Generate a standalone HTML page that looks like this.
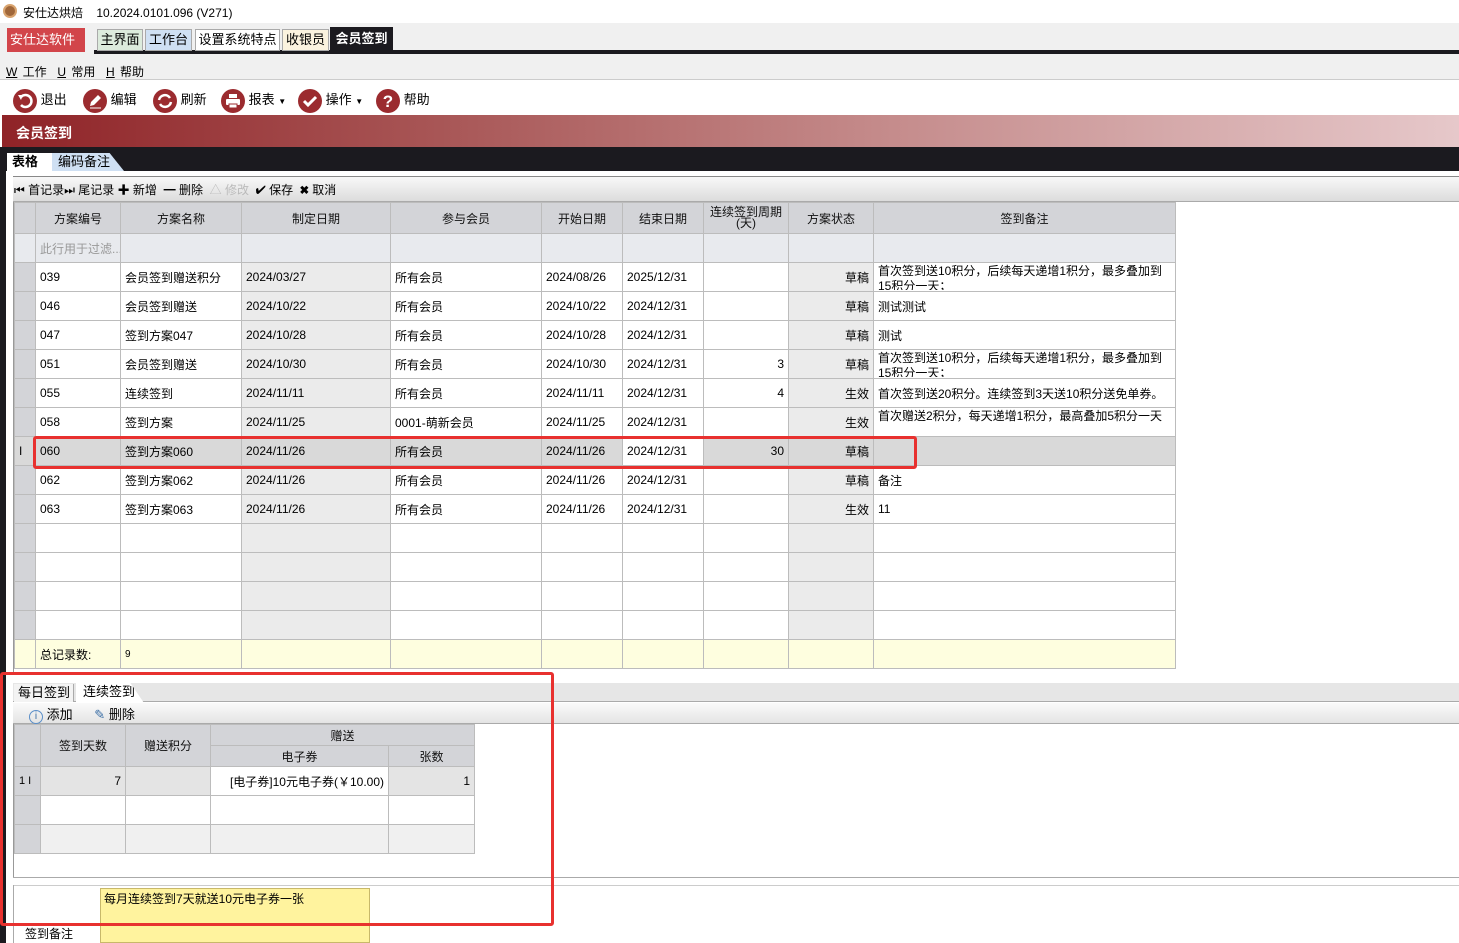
<!DOCTYPE html>
<html><head><meta charset="utf-8">
<style>
*{margin:0;padding:0;box-sizing:border-box}
body{width:1459px;height:943px;overflow:hidden;background:#fff;font-family:"Liberation Sans","Noto Sans CJK SC",sans-serif;font-size:12px;color:#000;position:relative}
.a{position:absolute}
.ico{display:inline-block;width:24px;height:24px;border-radius:50%;background:#9b2b2f;vertical-align:middle;position:relative}
.tb{position:absolute;top:88px;font-size:13px;line-height:24px;white-space:nowrap}
table{border-collapse:collapse;table-layout:fixed;position:absolute}
td{border:1px solid #bcbcbc;padding:0 4px;white-space:nowrap;overflow:hidden;font-size:12px}
.h td{background:#d3d4d8;text-align:center;color:#111}
.f td{background:#e8eaee}
.g{background:#ebebeb}
.ind{background:#d3d4d8}
.r{text-align:right}
.sel td{background:#d9d9d9}
.tot td{background:#fefedf}
.m{line-height:15px;white-space:normal;height:26px;overflow:hidden}
</style></head><body>
<div class="a" style="left:3px;top:4px;width:14px;height:14px;border-radius:50%;background:#a0673a;border:2px solid #d9a46f"></div>
<div class="a" style="left:23px;top:4px;font-size:12px">安仕达烘焙 &nbsp; &nbsp;10.2024.0101.096 (V271)</div>
<div class="a" style="left:0;top:23px;width:1459px;height:37px;background:#f0f0f0"></div>
<div class="a" style="left:7px;top:28px;width:78px;height:24px;background:#d2454a;color:#fff;font-size:13px;line-height:24px;padding-left:3px">安仕达软件 ▾</div>
<div class="a" style="left:94px;top:50px;width:1365px;height:4px;background:#1b1a1f"></div>
<div class="a" style="left:97px;top:29px;width:46px;height:22px;background:#dcebdc;border:1px solid #aaa;font-size:13px;line-height:20px;text-align:center">主界面</div>
<div class="a" style="left:145px;top:29px;width:47px;height:22px;background:#cfe0f3;border:1px solid #aaa;font-size:13px;line-height:20px;text-align:center">工作台</div>
<div class="a" style="left:195px;top:29px;width:85px;height:22px;background:#fff;border:1px solid #aaa;font-size:13px;line-height:20px;text-align:center">设置系统特点</div>
<div class="a" style="left:282px;top:29px;width:47px;height:22px;background:#fbf3df;border:1px solid #aaa;font-size:13px;line-height:20px;text-align:center">收银员</div>
<div class="a" style="left:330px;top:27px;width:63px;height:25px;background:#1b1a1f;color:#fff;font-size:13px;line-height:24px;text-align:center;font-weight:bold">会员签到</div>
<div class="a" style="left:0;top:60px;width:1459px;height:20px;background:#f0f0f0;border-bottom:1px solid #ccc"></div>
<div class="a" style="left:6px;top:63px;font-size:12px;word-spacing:2px"><u>W</u> 工作 &nbsp;<u>U</u> 常用 &nbsp;<u>H</u> 帮助</div>
<div class="tb" style="left:13px"><span class="ico"><svg width="24" height="24"><path d="M8 8 A6 6 0 1 1 8 16" stroke="#fff" stroke-width="2.5" fill="none"/><path d="M5 6 L10 6 L8 11z" fill="#fff"/></svg></span> 退出</div>
<div class="tb" style="left:83px"><span class="ico"><svg width="24" height="24"><path d="M7 17 L8 13 L15 6 L18 9 L11 16z" fill="#fff"/><path d="M7 19h11" stroke="#fff" stroke-width="1"/></svg></span> 编辑</div>
<div class="tb" style="left:153px"><span class="ico"><svg width="24" height="24"><path d="M6 11 A6 6 0 0 1 17 9 M18 13 A6 6 0 0 1 7 15" stroke="#fff" stroke-width="2.5" fill="none"/></svg></span> 刷新</div>
<div class="tb" style="left:221px"><span class="ico"><svg width="24" height="24"><rect x="8" y="5" width="8" height="4" fill="#fff"/><rect x="5" y="10" width="14" height="6" rx="1" fill="#fff"/><rect x="8" y="15" width="8" height="4" fill="#fff" stroke="#9b2b2f"/></svg></span> 报表 <span style="font-size:8px">▼</span></div>
<div class="tb" style="left:298px"><span class="ico"><svg width="24" height="24"><path d="M6 12 L10 16 L18 8" stroke="#fff" stroke-width="3" fill="none"/></svg></span> 操作 <span style="font-size:8px">▼</span></div>
<div class="tb" style="left:376px"><span class="ico"><svg width="24" height="24"><text x="12" y="18" font-size="17" font-weight="bold" fill="#fff" text-anchor="middle" font-family="Liberation Sans">?</text></svg></span> 帮助</div>
<div class="a" style="left:2px;top:115px;width:1457px;height:32px;background:linear-gradient(90deg,#8f2327 0%,#a85656 30%,#c48a8a 60%,#e6c8ca 100%)"></div>
<div class="a" style="left:16px;top:123px;color:#fff;font-size:14px;font-weight:bold">会员签到</div>
<div class="a" style="left:0;top:147px;width:1459px;height:24px;background:#1b1a1f"></div>
<div class="a" style="left:0;top:147px;width:6px;height:796px;background:#1b1a1f"></div>
<div class="a" style="left:7px;top:153px;width:45px;height:18px;background:#fff;font-weight:bold;font-size:13px;padding-left:5px;line-height:18px">表格</div>
<div class="a" style="left:52px;top:153px;width:72px;height:18px;background:#cfe0f3;clip-path:polygon(0 0,80% 0,100% 100%,0 100%);font-size:13px;padding-left:6px;line-height:18px">编码备注</div>
<div class="a" style="left:6px;top:171px;width:1453px;height:772px;background:#fff"></div>
<div class="a" style="left:13px;top:176px;width:1446px;height:26px;background:linear-gradient(#f8f8f8,#dcdcdc);border-top:1px solid #888;border-bottom:1px solid #aaa"></div>
<div class="a" style="left:14px;top:181px;font-size:12px">⏮ 首记录⏭ 尾记录 ✚ 新增 &nbsp;━ 删除 &nbsp;<span style="color:#bbb">△ 修改</span> &nbsp;✔ 保存 &nbsp;✖ 取消</div>
<div class="a" style="left:13px;top:202px;width:1px;height:470px;background:#999"></div>
<table style="left:14px;top:202px;width:1161px">
<col style="width:21px"><col style="width:85px"><col style="width:121px"><col style="width:149px"><col style="width:151px"><col style="width:81px"><col style="width:81px"><col style="width:85px"><col style="width:85px"><col style="width:302px">
<tr class="h" style="height:31px"><td></td><td>方案编号</td><td>方案名称</td><td>制定日期</td><td>参与会员</td><td>开始日期</td><td>结束日期</td><td style="line-height:11px;white-space:normal;padding:0">连续签到周期(天)</td><td>方案状态</td><td>签到备注</td></tr>
<tr class="f" style="height:29px"><td class="ind"></td><td style="color:#999">此行用于过滤...</td><td></td><td></td><td></td><td></td><td></td><td></td><td></td><td></td></tr>
<tr style="height:29px"><td class="ind"></td><td>039</td><td>会员签到赠送积分</td><td class="g">2024/03/27</td><td>所有会员</td><td>2024/08/26</td><td>2025/12/31</td><td></td><td class="g r">草稿</td><td><div class="m">首次签到送10积分，后续每天递增1积分，最多叠加到15积分一天；</div></td></tr>
<tr style="height:29px"><td class="ind"></td><td>046</td><td>会员签到赠送</td><td class="g">2024/10/22</td><td>所有会员</td><td>2024/10/22</td><td>2024/12/31</td><td></td><td class="g r">草稿</td><td>测试测试</td></tr>
<tr style="height:29px"><td class="ind"></td><td>047</td><td>签到方案047</td><td class="g">2024/10/28</td><td>所有会员</td><td>2024/10/28</td><td>2024/12/31</td><td></td><td class="g r">草稿</td><td>测试</td></tr>
<tr style="height:29px"><td class="ind"></td><td>051</td><td>会员签到赠送</td><td class="g">2024/10/30</td><td>所有会员</td><td>2024/10/30</td><td>2024/12/31</td><td class="r">3</td><td class="g r">草稿</td><td><div class="m">首次签到送10积分，后续每天递增1积分，最多叠加到15积分一天；</div></td></tr>
<tr style="height:29px"><td class="ind"></td><td>055</td><td>连续签到</td><td class="g">2024/11/11</td><td>所有会员</td><td>2024/11/11</td><td>2024/12/31</td><td class="r">4</td><td class="g r">生效</td><td>首次签到送20积分。连续签到3天送10积分送免单券。</td></tr>
<tr style="height:29px"><td class="ind"></td><td>058</td><td>签到方案</td><td class="g">2024/11/25</td><td>0001-萌新会员</td><td>2024/11/25</td><td>2024/12/31</td><td></td><td class="g r">生效</td><td><div class="m">首次赠送2积分，每天递增1积分，最高叠加5积分一天</div></td></tr>
<tr class="sel" style="height:29px"><td class="ind">I</td><td>060</td><td>签到方案060</td><td>2024/11/26</td><td>所有会员</td><td>2024/11/26</td><td style="background:#fff">2024/12/31</td><td class="r">30</td><td class="r">草稿</td><td></td></tr>
<tr style="height:29px"><td class="ind"></td><td>062</td><td>签到方案062</td><td class="g">2024/11/26</td><td>所有会员</td><td>2024/11/26</td><td>2024/12/31</td><td></td><td class="g r">草稿</td><td>备注</td></tr>
<tr style="height:29px"><td class="ind"></td><td>063</td><td>签到方案063</td><td class="g">2024/11/26</td><td>所有会员</td><td>2024/11/26</td><td>2024/12/31</td><td></td><td class="g r">生效</td><td>11</td></tr>
<tr style="height:29px"><td class="ind"></td><td></td><td></td><td class="g"></td><td></td><td></td><td></td><td></td><td class="g"></td><td></td></tr>
<tr style="height:29px"><td class="ind"></td><td></td><td></td><td class="g"></td><td></td><td></td><td></td><td></td><td class="g"></td><td></td></tr>
<tr style="height:29px"><td class="ind"></td><td></td><td></td><td class="g"></td><td></td><td></td><td></td><td></td><td class="g"></td><td></td></tr>
<tr style="height:29px"><td class="ind"></td><td></td><td></td><td class="g"></td><td></td><td></td><td></td><td></td><td class="g"></td><td></td></tr>
<tr class="tot" style="height:29px"><td class="ind"></td><td>总记录数:</td><td style="font-size:10px">9</td><td></td><td></td><td></td><td></td><td></td><td></td><td></td></tr>
</table>
<div class="a" style="left:13px;top:683px;width:1446px;height:19px;background:#e6e6e6;border-bottom:1px solid #aaa"></div>
<div class="a" style="left:14px;top:684px;width:60px;height:18px;background:#f3f3f3;border-right:1px solid #aaa;font-size:13px;padding-left:4px;line-height:17px">每日签到</div>
<div class="a" style="left:76px;top:683px;width:68px;height:20px;background:#fff;clip-path:polygon(0 0,80% 0,100% 100%,0 100%);font-size:13px;padding-left:7px;line-height:18px">连续签到</div>
<div class="a" style="left:13px;top:703px;width:1446px;height:21px;background:linear-gradient(#fafafa,#e4e4e4);border-bottom:1px solid #aaa"></div>
<div class="a" style="left:29px;top:704px;font-size:13px"><span style="display:inline-block;width:14px;height:14px;border:1px solid #5b8fc9;border-radius:50%;font-size:10px;text-align:center;line-height:12px;color:#3a6ea5">i</span> 添加 &nbsp; &nbsp; &nbsp;<span style="color:#3a6ea5">✎</span> 删除</div>
<div class="a" style="left:13px;top:724px;width:1px;height:154px;background:#999"></div>
<div class="a" style="left:13px;top:877px;width:1446px;height:1px;background:#aaa"></div>
<table style="left:14px;top:724px;width:460px">
<col style="width:26px"><col style="width:85px"><col style="width:85px"><col style="width:178px"><col style="width:86px">
<tr class="h" style="height:21px"><td rowspan="2"></td><td rowspan="2">签到天数</td><td rowspan="2">赠送积分</td><td colspan="2">赠送</td></tr>
<tr class="h" style="height:21px"><td>电子券</td><td>张数</td></tr>
<tr style="height:29px"><td class="ind" style="font-size:11px">1 I</td><td class="r" style="background:#e4e4e4">7</td><td style="background:#e4e4e4"></td><td class="r">[电子券]10元电子券(￥10.00)</td><td class="r" style="background:#e4e4e4">1</td></tr>
<tr style="height:29px"><td class="ind"></td><td></td><td></td><td></td><td></td></tr>
<tr style="height:29px;background:#f0f0f0"><td class="ind"></td><td></td><td></td><td></td><td></td></tr>
</table>
<div class="a" style="left:13px;top:885px;width:1446px;height:1px;background:#ccc"></div>
<div class="a" style="left:13px;top:885px;width:1px;height:58px;background:#aaa"></div>
<div class="a" style="left:100px;top:888px;width:270px;height:55px;background:#fff39e;border:1px solid #c8b86a;font-size:12px;padding:1px 3px">每月连续签到7天就送10元电子券一张</div>
<div class="a" style="left:25px;top:925px;font-size:12px">签到备注</div>
<div class="a" style="left:33px;top:436px;width:884px;height:33px;border:3px solid #e8312f;border-radius:3px"></div>
<div class="a" style="left:0;top:672px;width:554px;height:254px;border:3px solid #e8312f;border-radius:3px"></div>
</body></html>
